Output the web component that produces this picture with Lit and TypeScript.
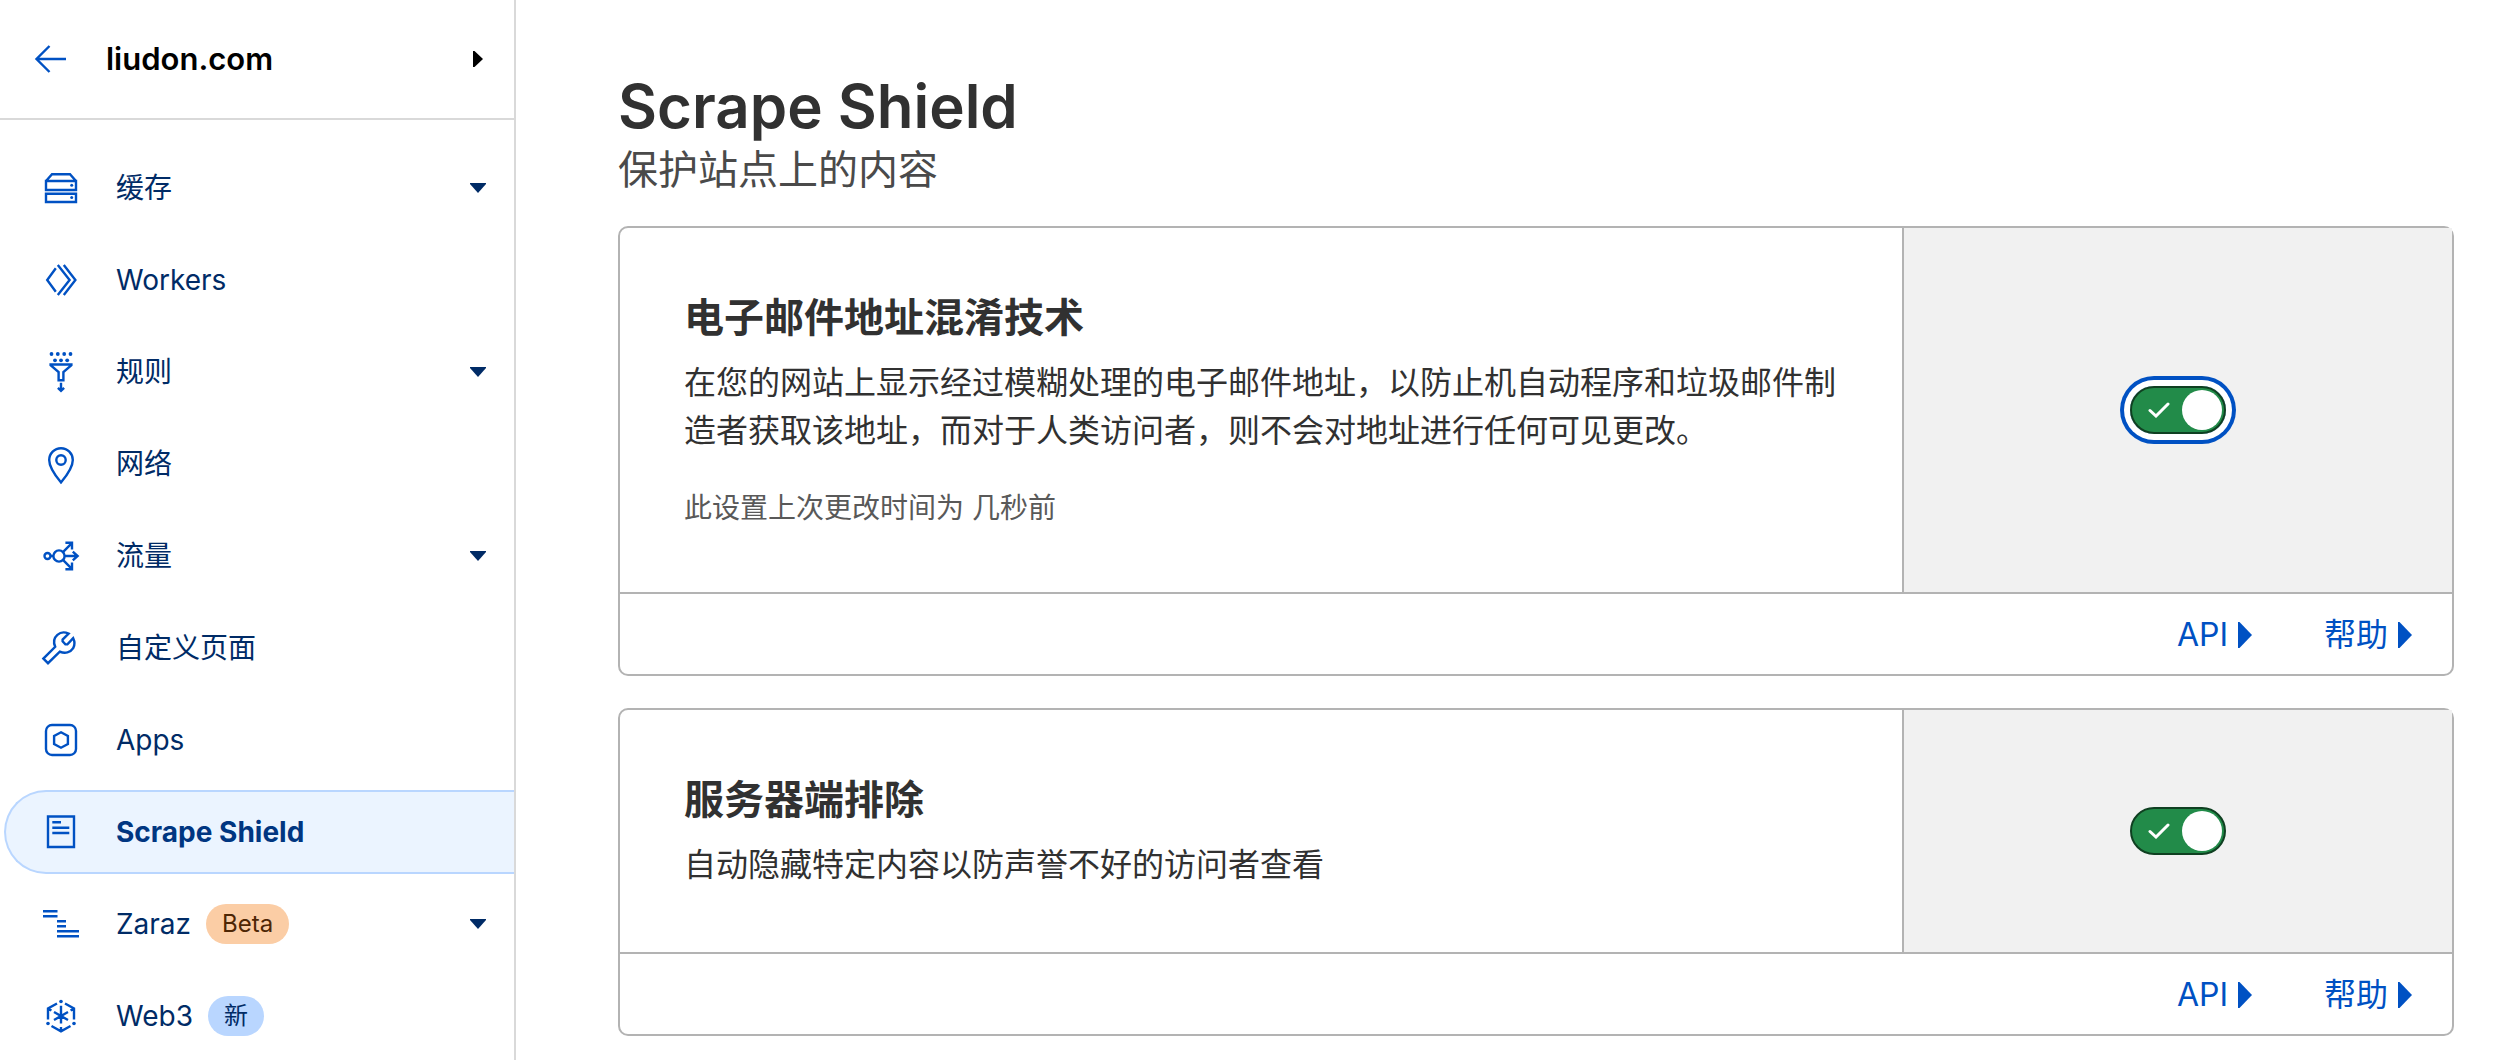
import { LitElement, html, css, svg, nothing, type TemplateResult } from "lit";
import { customElement, property, state } from "lit/decorators.js";
import { classMap } from "lit/directives/class-map.js";

interface NavEntry {
  label: string;
  icon: string;
  expandable?: boolean;
  active?: boolean;
  badge?: { text: string; tone: "beta" | "new" };
}

interface Setting {
  id: string;
  title: string;
  description: string;
  note?: string;
}

const NAV: NavEntry[] = [
  { label: "缓存", icon: "cache", expandable: true },
  { label: "Workers", icon: "workers" },
  { label: "规则", icon: "rules", expandable: true },
  { label: "网络", icon: "network" },
  { label: "流量", icon: "traffic", expandable: true },
  { label: "自定义页面", icon: "wrench" },
  { label: "Apps", icon: "apps" },
  { label: "Scrape Shield", icon: "page", active: true },
  { label: "Zaraz", icon: "zaraz", expandable: true, badge: { text: "Beta", tone: "beta" } },
  { label: "Web3", icon: "web3", badge: { text: "新", tone: "new" } },
];

const SETTINGS: Setting[] = [
  {
    id: "email",
    title: "电子邮件地址混淆技术",
    description:
      "在您的网站上显示经过模糊处理的电子邮件地址，以防止机自动程序和垃圾邮件制造者获取该地址，而对于人类访问者，则不会对地址进行任何可见更改。",
    note: "此设置上次更改时间为 几秒前",
  },
  {
    id: "sse",
    title: "服务器端排除",
    description: "自动隐藏特定内容以防声誉不好的访问者查看",
  },
];

const ICONS: Record<string, TemplateResult> = {
  cache: svg`
    <path d="M3 11 9 4.2H27L33 11M3 11H33V20H3ZM3 23.8H33V32H3Z"/>
    <circle class="dot" cx="28.7" cy="15.2" r="1.5"/>
    <circle class="dot" cx="28.7" cy="27.5" r="1.5"/>`,
  workers: svg`
    <path d="M12.8 6.3 4.2 18 12.8 29.7M14.8 3 26.6 18 14.8 33M20.8 3 32.4 18 20.8 33"/>`,
  rules: svg`
    ${[8.5, 14.8, 21.2, 27.5].map((x) => svg`<circle class="dot" cx=${x} cy="0" r="1.9"/>`)}
    ${[12, 18, 24.2].map((x) => svg`<circle class="dot" cx=${x} cy="6.3" r="1.9"/>`)}
    <path d="M7.6 10.5H28.4V11.2L20.4 18V26.2H15.6V18L7.6 11.2ZM18 28.7V36.4M14.9 33.8 18 36.8 21.1 33.8"/>`,
  network: svg`
    <path d="M18 36.4C14 31.5 6.2 22.5 6.2 14A11.8 11.8 0 0 1 29.8 14C29.8 22.5 22 31.5 18 36.4Z"/>
    <circle cx="18" cy="14" r="4.7"/>`,
  traffic: svg`
    <circle cx="4.5" cy="18" r="3"/>
    <circle cx="16" cy="18" r="5.6"/>
    <path d="M7.5 18H10M22 18H34.5M29.8 13.6 34.6 18 29.8 22.4M20.2 13.8 28.6 5.4M22.4 4.8H29V11.4M20.2 22.2 28.6 30.6M22.4 31.2H29V24.6"/>`,
  wrench: svg`
    <path d="M0.4 28.6 5 33.2 16.8 21.6C22 24 27.5 22.6 30.2 18.2C31.8 15.2 31.8 11.4 30.2 8.2L24.4 14.4H22.4L19.6 11.4V9.6L25.6 3.6C22 2 17.4 2.2 14.4 4.8C11.2 7.6 10.2 12.2 12.2 16.8Z"/>`,
  apps: svg`
    <rect x="3" y="3" width="30" height="30" rx="6"/>
    <path d="M18 10.3 24.9 14V22L18 25.7 11.1 22V14Z"/>`,
  page: svg`
    <path d="M5 2.5H31V33H5ZM9.3 8.3H18M9.3 13.7H26.3M9.3 19H26.3"/>`,
  zaraz: svg`
    <path d="M0 5.3H14.5M0 10.3H14.5M14 15.3H23M14 20.3H23M14 25.3H36M14 30.3H36"/>`,
  web3: svg`
    <circle class="dot" cx="18" cy="3.5" r="1.8"/>
    <circle class="dot" cx="5" cy="25.5" r="1.8"/>
    <circle class="dot" cx="31" cy="25.5" r="1.8"/>
    <path d="M14 5.5 5 10.5V21.5M5 10.5 8.4 12.5M22 5.5 31 10.5V21.5M31 10.5 27.6 12.5M8.5 28 18 33.3 27.5 28M18 29V33M18 7.7V25.5M11 14 25 22M25 14 11 22"/>`,
};

@customElement("nav-item")
class NavItem extends LitElement {
  @property({ attribute: false }) entry!: NavEntry;

  static styles = css`
    :host {
      display: block;
    }
    .item {
      box-sizing: border-box;
      display: flex;
      align-items: center;
      width: 100%;
      height: 84px;
      margin: 0;
      padding: 0 28px 0 37px;
      border: 2px solid transparent;
      border-right: 0;
      border-radius: 42px 0 0 42px;
      background: none;
      color: #002b66;
      font: inherit;
      font-size: 28px;
      line-height: 40px;
      text-align: left;
      text-decoration: none;
      cursor: pointer;
    }
    .active {
      border-color: #b9d6ff;
      background: #ebf4ff;
      color: #003681;
      font-weight: 700;
    }
    .icon {
      flex: none;
      width: 36px;
      height: 36px;
      margin-right: 37px;
      overflow: visible;
      fill: none;
      stroke: #0051c3;
      stroke-width: 2.4;
    }
    .dot {
      fill: #0051c3;
      stroke: none;
    }
    .badge {
      margin-left: 15px;
      padding: 0 16px;
      border-radius: 20px;
      font-size: 24px;
      line-height: 40px;
    }
    .beta {
      background: #fbcda5;
      color: #4e2604;
    }
    .new {
      background: #b9d6ff;
    }
    .caret {
      width: 16px;
      height: 10px;
      margin-left: auto;
      fill: currentColor;
    }
  `;

  render() {
    const e = this.entry;
    const content = html`
      <svg class="icon" viewBox="0 0 36 36" aria-hidden="true">${ICONS[e.icon]}</svg>
      <span>${e.label}</span>
      ${e.badge
        ? html`<span class=${classMap({ badge: true, [e.badge.tone]: true })}>${e.badge.text}</span>`
        : nothing}
      ${e.expandable
        ? html`<svg class="caret" viewBox="0 0 16 10" aria-hidden="true"><path d="M0 0H16V1L8 10 0 1Z" /></svg>`
        : nothing}
    `;
    return e.expandable
      ? html`<button class="item" type="button" aria-expanded="false">${content}</button>`
      : html`<a
          class=${classMap({ item: true, active: !!e.active })}
          href="#${e.icon}"
          aria-current=${e.active ? "page" : nothing}
          >${content}</a
        >`;
  }
}

@customElement("setting-card")
class SettingCard extends LitElement {
  @property({ attribute: false }) setting!: Setting;
  @property({ type: Boolean }) highlighted = false;
  @state() private on = true;

  static styles = css`
    :host {
      display: block;
    }
    .card {
      border: 2px solid #b3b3b3;
      border-radius: 10px;
      background: #fff;
      color: #313131;
    }
    .body {
      display: grid;
      grid-template-columns: 7fr 3fr;
    }
    .text {
      padding: 65px 64px 63px;
    }
    .title {
      margin: 0 0 16px;
      font-size: 40px;
      font-weight: 600;
      line-height: 50px;
    }
    .description {
      margin: 0;
      font-size: 32px;
      line-height: 48px;
    }
    .note {
      margin: 32px 0 0;
      color: #595959;
      font-size: 28px;
      line-height: 42px;
    }
    .control {
      display: grid;
      place-items: center;
      border-left: 2px solid #b3b3b3;
      background: #f1f1f1;
    }
    .switch {
      display: grid;
      align-items: center;
      border-radius: 24px;
      cursor: pointer;
    }
    .ring {
      box-shadow: 0 0 0 6px #fff, 0 0 0 10px #0051c3;
    }
    .input {
      grid-area: 1 / 1;
      box-sizing: border-box;
      appearance: none;
      width: 96px;
      height: 48px;
      margin: 0;
      border: 2px solid #6d6d6d;
      border-radius: 24px;
      outline: none;
      background: #8d8d8d;
      cursor: pointer;
    }
    .input:checked {
      border-color: #0f4021;
      background: #228b49;
    }
    .knob {
      grid-area: 1 / 1;
      width: 40px;
      height: 40px;
      margin: 0 4px;
      border-radius: 20px;
      background: #fff;
      pointer-events: none;
    }
    .input:checked ~ .knob {
      justify-self: end;
    }
    .check {
      grid-area: 1 / 1;
      width: 22px;
      height: 16px;
      margin-left: 18px;
      fill: none;
      stroke: #fff;
      stroke-width: 3;
      stroke-linecap: round;
      pointer-events: none;
    }
    .footer {
      display: flex;
      justify-content: flex-end;
      gap: 72px;
      padding: 17px 40px 15px;
      border-top: 2px solid #b3b3b3;
    }
    .more {
      display: flex;
      align-items: center;
      gap: 10px;
      margin: 0;
      padding: 0;
      border: 0;
      background: none;
      color: #0051c3;
      font: inherit;
      font-size: 32px;
      line-height: 48px;
      cursor: pointer;
    }
    .arrow {
      width: 14px;
      height: 26px;
      fill: currentColor;
    }
  `;

  render() {
    const s = this.setting;
    return html`
      <section class="card">
        <div class="body">
          <div class="text">
            <h2 class="title">${s.title}</h2>
            <p class="description">${s.description}</p>
            ${s.note ? html`<p class="note">${s.note}</p>` : nothing}
          </div>
          <div class="control">
            <label class=${classMap({ switch: true, ring: this.highlighted })}>
              <input
                class="input"
                type="checkbox"
                role="switch"
                aria-label=${s.title}
                .checked=${this.on}
                @change=${(ev: Event) => (this.on = (ev.target as HTMLInputElement).checked)}
              />
              ${this.on
                ? html`<svg class="check" viewBox="0 0 22 16" aria-hidden="true">
                    <path d="M2 8.5 8 14 20 2" />
                  </svg>`
                : nothing}
              <span class="knob"></span>
            </label>
          </div>
        </div>
        <div class="footer">
          ${["API", "帮助"].map(
            (label) => html`<button class="more" type="button" aria-expanded="false">
              <span>${label}</span>
              <svg class="arrow" viewBox="0 0 14 26" aria-hidden="true"><path d="M0 0H1.5L14 13 1.5 26H0Z" /></svg>
            </button>`
          )}
        </div>
      </section>
    `;
  }
}

@customElement("app-root")
class AppRoot extends LitElement {
  @state() private focused = "email";

  static styles = css`
    :host {
      display: grid;
      grid-template-columns: 516px minmax(0, 1fr);
      min-height: 100vh;
      background: #fff;
      font-family: Inter, "Noto Sans CJK SC", sans-serif;
    }
    .sidebar {
      border-right: 2px solid #d9d9d9;
    }
    .zone {
      display: flex;
      align-items: center;
      height: 118px;
      padding: 0 31px 0 34px;
      border-bottom: 2px solid #d9d9d9;
    }
    .back {
      display: flex;
      margin-right: 40px;
    }
    .back-icon {
      width: 32px;
      height: 28px;
      fill: none;
      stroke: #0051c3;
      stroke-width: 2.4;
    }
    .switcher {
      display: flex;
      flex: 1;
      align-items: center;
      justify-content: space-between;
      margin: 0;
      padding: 0;
      border: 0;
      background: none;
      color: #000;
      font: inherit;
      font-size: 31px;
      font-weight: 600;
      line-height: 48px;
      cursor: pointer;
    }
    .zone-caret {
      width: 10px;
      height: 16px;
      fill: currentColor;
    }
    .list {
      display: grid;
      gap: 8px;
      margin: 0;
      padding: 26px 0 0 4px;
      list-style: none;
    }
    .main {
      padding: 66px 58px 24px 102px;
    }
    .heading {
      margin: 0;
      color: #313131;
      font-size: 60px;
      font-weight: 600;
      line-height: 80px;
    }
    .subtitle {
      margin: 0 0 32px;
      color: #4a4a4a;
      font-size: 40px;
      line-height: 48px;
    }
    .cards {
      display: grid;
      gap: 32px;
    }
  `;

  render() {
    return html`
      <aside class="sidebar">
        <div class="zone">
          <a class="back" href="#home" aria-label="返回">
            <svg class="back-icon" viewBox="0 0 32 28" aria-hidden="true">
              <path d="M32 14H2.5M15.5 1 2.5 14 15.5 27" />
            </svg>
          </a>
          <button class="switcher" type="button">
            <span>liudon.com</span>
            <svg class="zone-caret" viewBox="0 0 10 16" aria-hidden="true"><path d="M0 0H1.5L10 8 1.5 16H0Z" /></svg>
          </button>
        </div>
        <nav>
          <ul class="list">
            ${NAV.map((entry) => html`<li><nav-item .entry=${entry}></nav-item></li>`)}
          </ul>
        </nav>
      </aside>
      <main class="main">
        <h1 class="heading">Scrape Shield</h1>
        <p class="subtitle">保护站点上的内容</p>
        <div class="cards">
          ${SETTINGS.map(
            (s) => html`<setting-card
              .setting=${s}
              ?highlighted=${this.focused === s.id}
              @focusin=${() => (this.focused = s.id)}
            ></setting-card>`
          )}
        </div>
      </main>
    `;
  }
}
